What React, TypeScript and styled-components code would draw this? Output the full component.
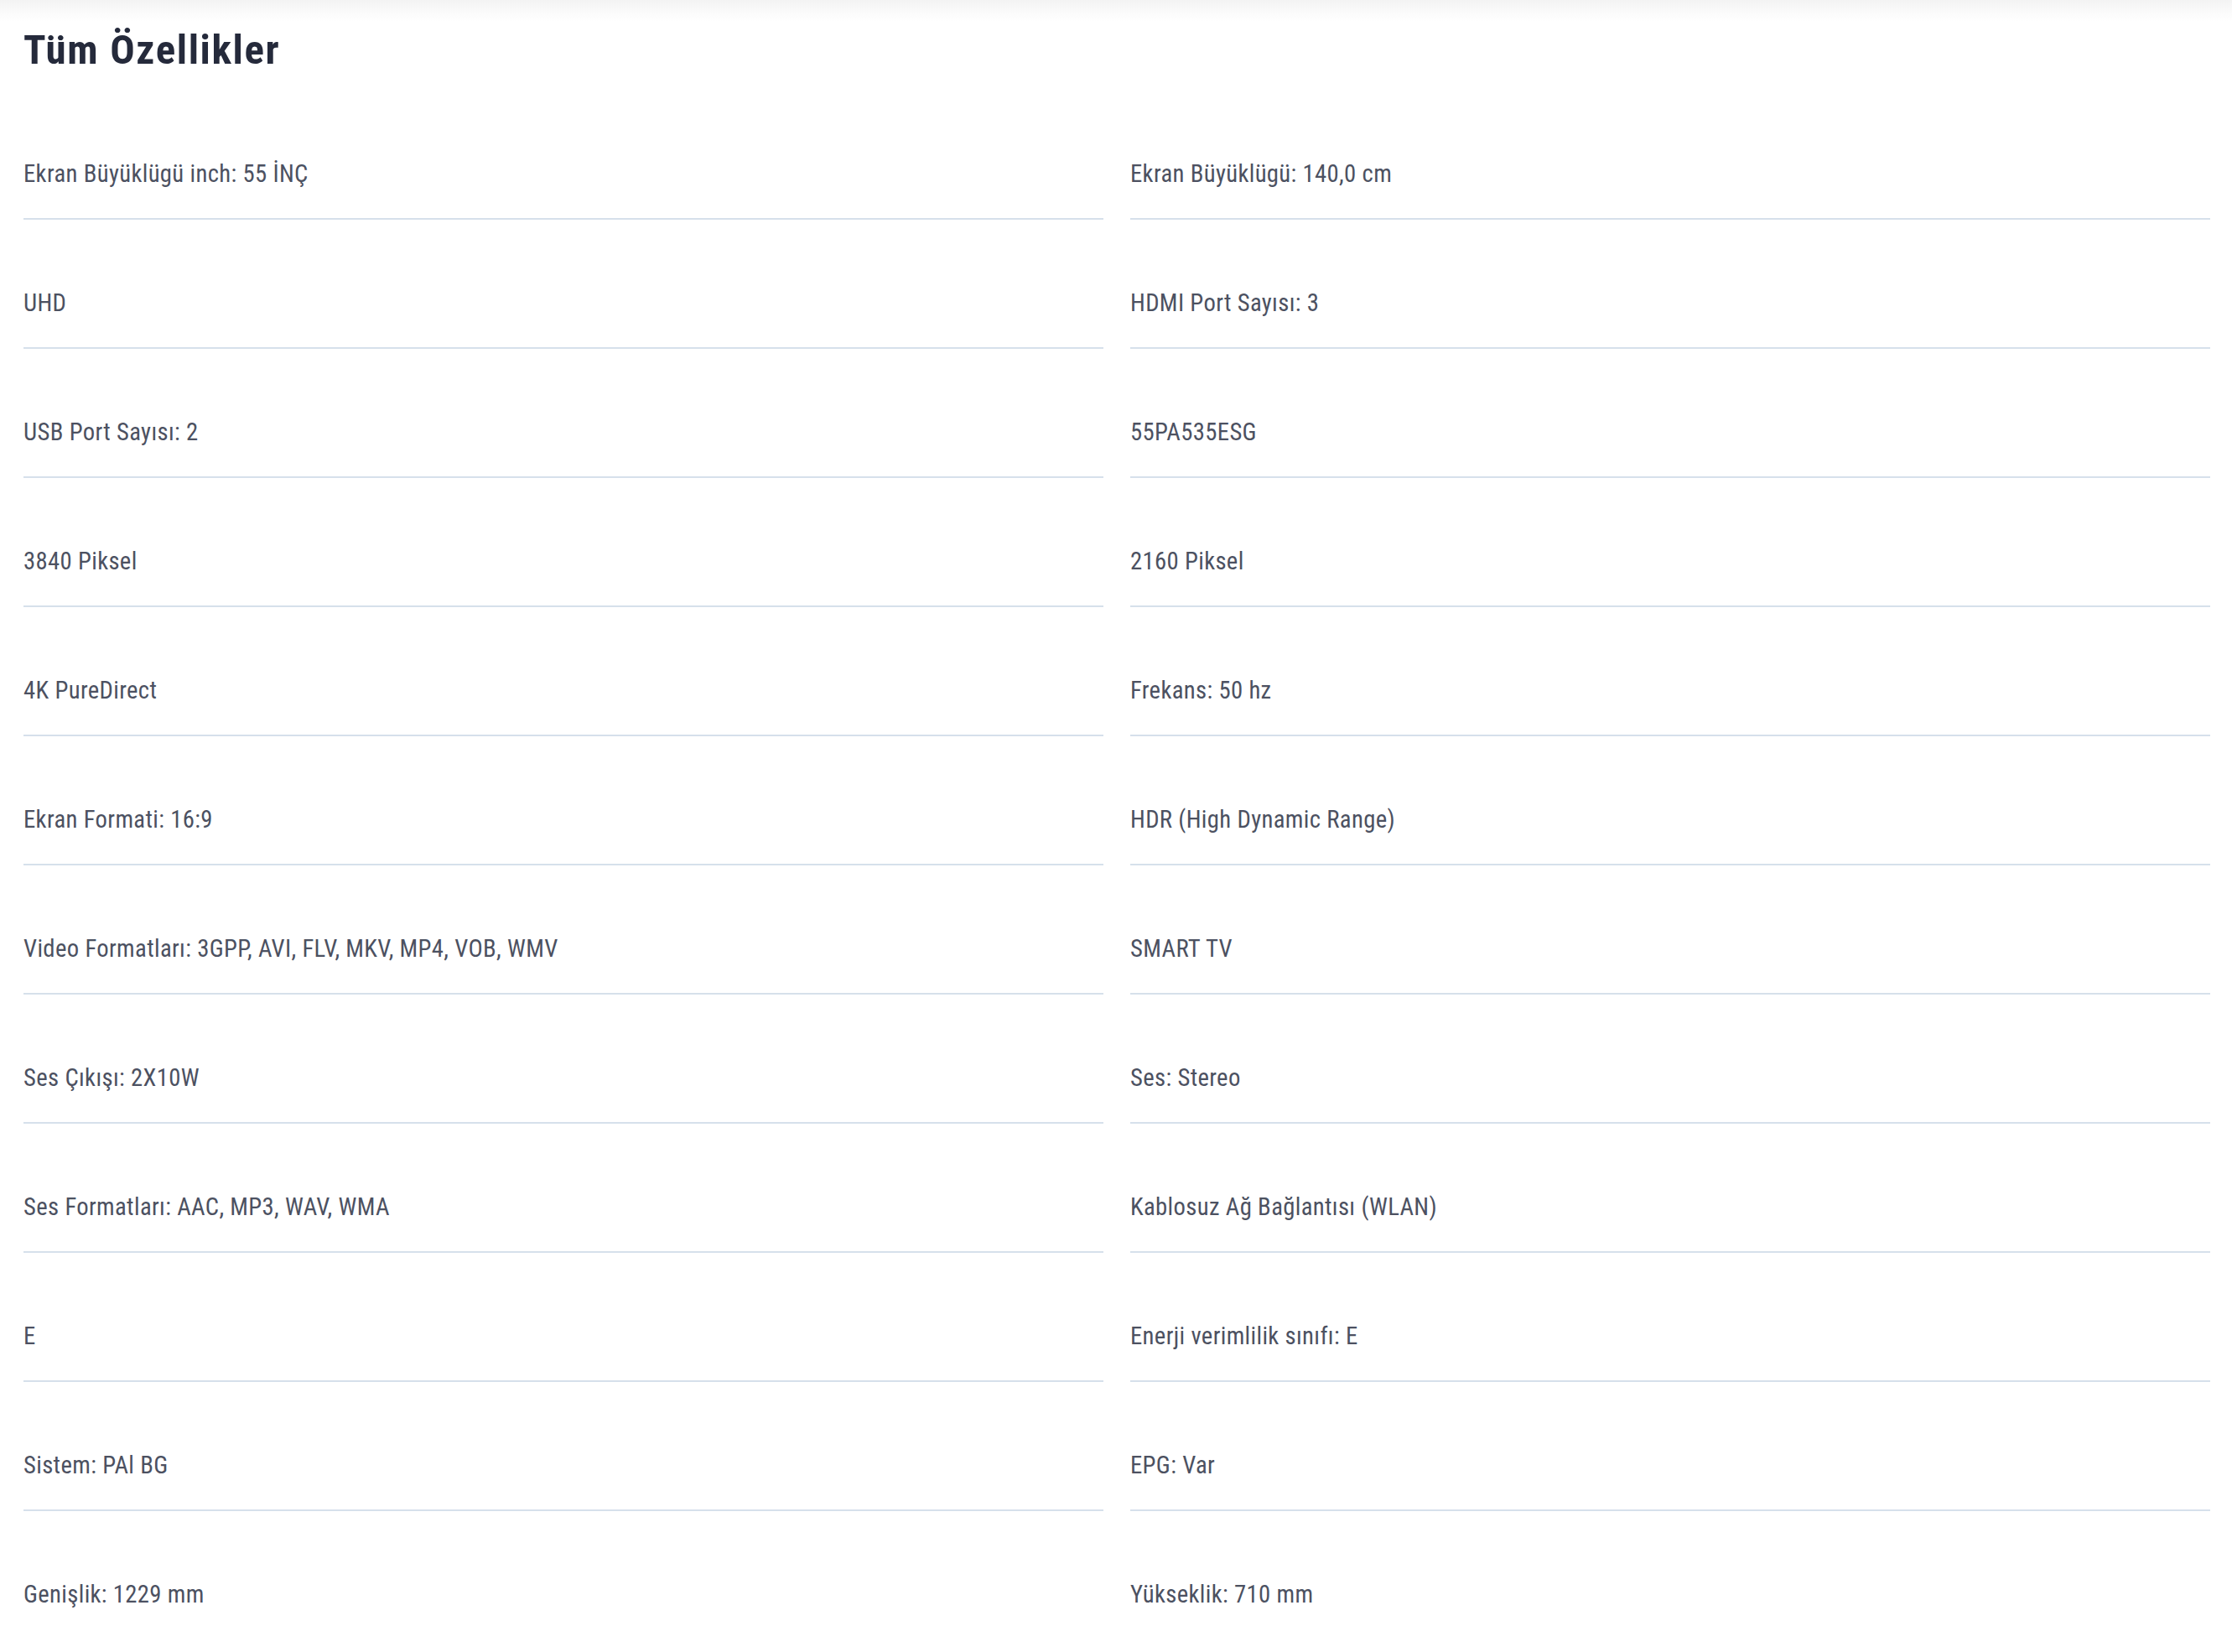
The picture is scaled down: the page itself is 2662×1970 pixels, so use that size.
import React from "react";
import styled, { createGlobalStyle } from "styled-components";

const GlobalStyle = createGlobalStyle`
  html, body {
    margin: 0;
    padding: 0;
    background: #ffffff;
  }
  body {
    font-family: Roboto, "Open Sans", sans-serif;
    -webkit-font-smoothing: antialiased;
  }
`;

const Page = styled.main`
  display: flex;
  flex-direction: column;
  min-height: 1970px;
  background: #ffffff;
`;

const TopShade = styled.div`
  height: 26px;
  background: linear-gradient(to bottom, #f3f3f3 0%, #fafafa 50%, #ffffff 100%);
`;

const Section = styled.section`
  display: flex;
  flex-direction: column;
  gap: 18px;
  padding: 4px 26px 0 28px;
`;

const Title = styled.h2`
  margin: 0;
  font-family: Roboto, "Open Sans", sans-serif;
  font-stretch: condensed;
  font-weight: 700;
  font-size: 49px;
  line-height: 60px;
  color: #252a3b;
  letter-spacing: 1.6px;
`;

const SpecGrid = styled.ul`
  list-style: none;
  margin: 0;
  padding: 0;
  display: grid;
  grid-template-columns: 1fr 1fr;
  column-gap: 32px;
`;

const SpecItem = styled.li<{ $last: boolean }>`
  padding: 81px 0 35px;
  border-bottom: 2px solid ${(p) => (p.$last ? "transparent" : "#d6e0eb")};
  font-family: Roboto, "Open Sans", sans-serif;
  font-stretch: condensed;
  font-weight: 400;
  font-size: 28.7px;
  line-height: 36px;
  letter-spacing: 0.35px;
  color: #4c5161;
  white-space: nowrap;
`;

const specs: [string, string][] = [
  ["Ekran Büyüklügü inch: 55 İNÇ", "Ekran Büyüklügü: 140,0 cm"],
  ["UHD", "HDMI Port Sayısı: 3"],
  ["USB Port Sayısı: 2", "55PA535ESG"],
  ["3840 Piksel", "2160 Piksel"],
  ["4K PureDirect", "Frekans: 50 hz"],
  ["Ekran Formati: 16:9", "HDR (High Dynamic Range)"],
  ["Video Formatları: 3GPP, AVI, FLV, MKV, MP4, VOB, WMV", "SMART TV"],
  ["Ses Çıkışı: 2X10W", "Ses: Stereo"],
  ["Ses Formatları: AAC, MP3, WAV, WMA", "Kablosuz Ağ Bağlantısı (WLAN)"],
  ["E", "Enerji verimlilik sınıfı: E"],
  ["Sistem: PAl BG", "EPG: Var"],
  ["Genişlik: 1229 mm", "Yükseklik: 710 mm"],
];

export default function App() {
  return (
    <>
      <GlobalStyle />
      <Page>
        <TopShade />
        <Section>
          <Title>Tüm Özellikler</Title>
          <SpecGrid>
            {specs.map(([left, right], i) => {
              const last = i === specs.length - 1;
              return (
                <React.Fragment key={i}>
                  <SpecItem $last={last}>{left}</SpecItem>
                  <SpecItem $last={last}>{right}</SpecItem>
                </React.Fragment>
              );
            })}
          </SpecGrid>
        </Section>
      </Page>
    </>
  );
}
